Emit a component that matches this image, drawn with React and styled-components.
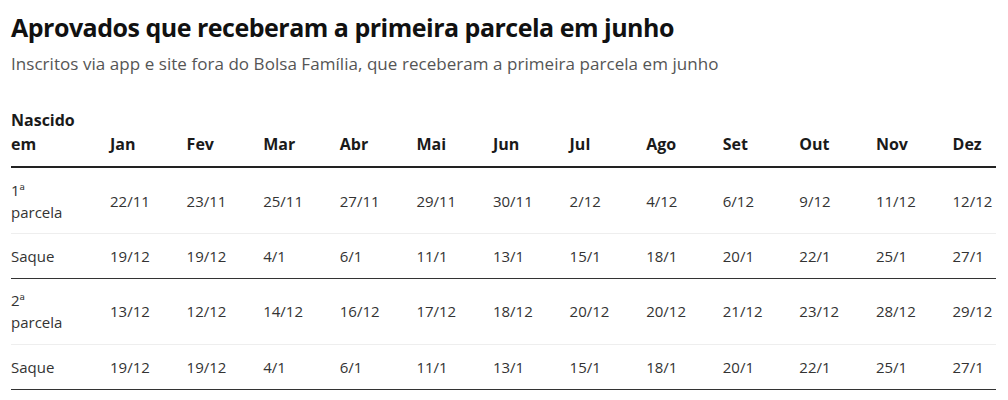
import React from 'react'
import styled, { createGlobalStyle } from 'styled-components'

const GlobalStyle = createGlobalStyle`
  body {
    margin: 0;
    background: #fff;
    font-family: 'Open Sans', 'Liberation Sans', sans-serif;
  }
`

const Wrapper = styled.div`
  padding: 10px 12px 0 11px;
`

const Title = styled.h1`
  margin: 0;
  font-size: 25px;
  line-height: 34px;
  font-weight: 700;
  letter-spacing: -0.5px;
  color: #111;
`

const Subtitle = styled.p`
  margin: 8px 0 0;
  font-size: 17px;
  line-height: 24px;
  letter-spacing: 0.05px;
  color: #555;
`

const Grid = styled.div`
  margin-top: 32px;
  display: grid;
  grid-template-columns: 99px repeat(11, 76.6px) 1fr;
`

const HeadCell = styled.div`
  display: flex;
  align-items: flex-end;
  padding: 0 0 10px;
  font-size: 16px;
  line-height: 24px;
  font-weight: 700;
  color: #1a1a1a;
  border-bottom: 2px solid #222;
`

const Cell = styled.div`
  display: flex;
  align-items: center;
  padding: 10.7px 0;
  font-size: 15px;
  line-height: 22px;
  color: #333;
  border-bottom: 1px solid ${({ $strong }) => ($strong ? '#333' : '#eee')};
`

const months = ['Jan', 'Fev', 'Mar', 'Abr', 'Mai', 'Jun', 'Jul', 'Ago', 'Set', 'Out', 'Nov', 'Dez']

const rows = [
  { label: <>1ª<br />parcela</>, values: ['22/11', '23/11', '25/11', '27/11', '29/11', '30/11', '2/12', '4/12', '6/12', '9/12', '11/12', '12/12'] },
  { label: 'Saque', strong: true, values: ['19/12', '19/12', '4/1', '6/1', '11/1', '13/1', '15/1', '18/1', '20/1', '22/1', '25/1', '27/1'] },
  { label: <>2ª<br />parcela</>, values: ['13/12', '12/12', '14/12', '16/12', '17/12', '18/12', '20/12', '20/12', '21/12', '23/12', '28/12', '29/12'] },
  { label: 'Saque', strong: true, values: ['19/12', '19/12', '4/1', '6/1', '11/1', '13/1', '15/1', '18/1', '20/1', '22/1', '25/1', '27/1'] }
]

export default function App() {
  return (
    <>
      <GlobalStyle />
      <Wrapper>
        <Title>Aprovados que receberam a primeira parcela em junho</Title>
        <Subtitle>Inscritos via app e site fora do Bolsa Família, que receberam a primeira parcela em junho</Subtitle>
        <Grid>
          <HeadCell>Nascido<br />em</HeadCell>
          {months.map(m => <HeadCell key={m}>{m}</HeadCell>)}
          {rows.map((row, i) => (
            <React.Fragment key={i}>
              <Cell $strong={row.strong}>{row.label}</Cell>
              {row.values.map((v, j) => (
                <Cell key={j} $strong={row.strong}>{v}</Cell>
              ))}
            </React.Fragment>
          ))}
        </Grid>
      </Wrapper>
    </>
  )
}
